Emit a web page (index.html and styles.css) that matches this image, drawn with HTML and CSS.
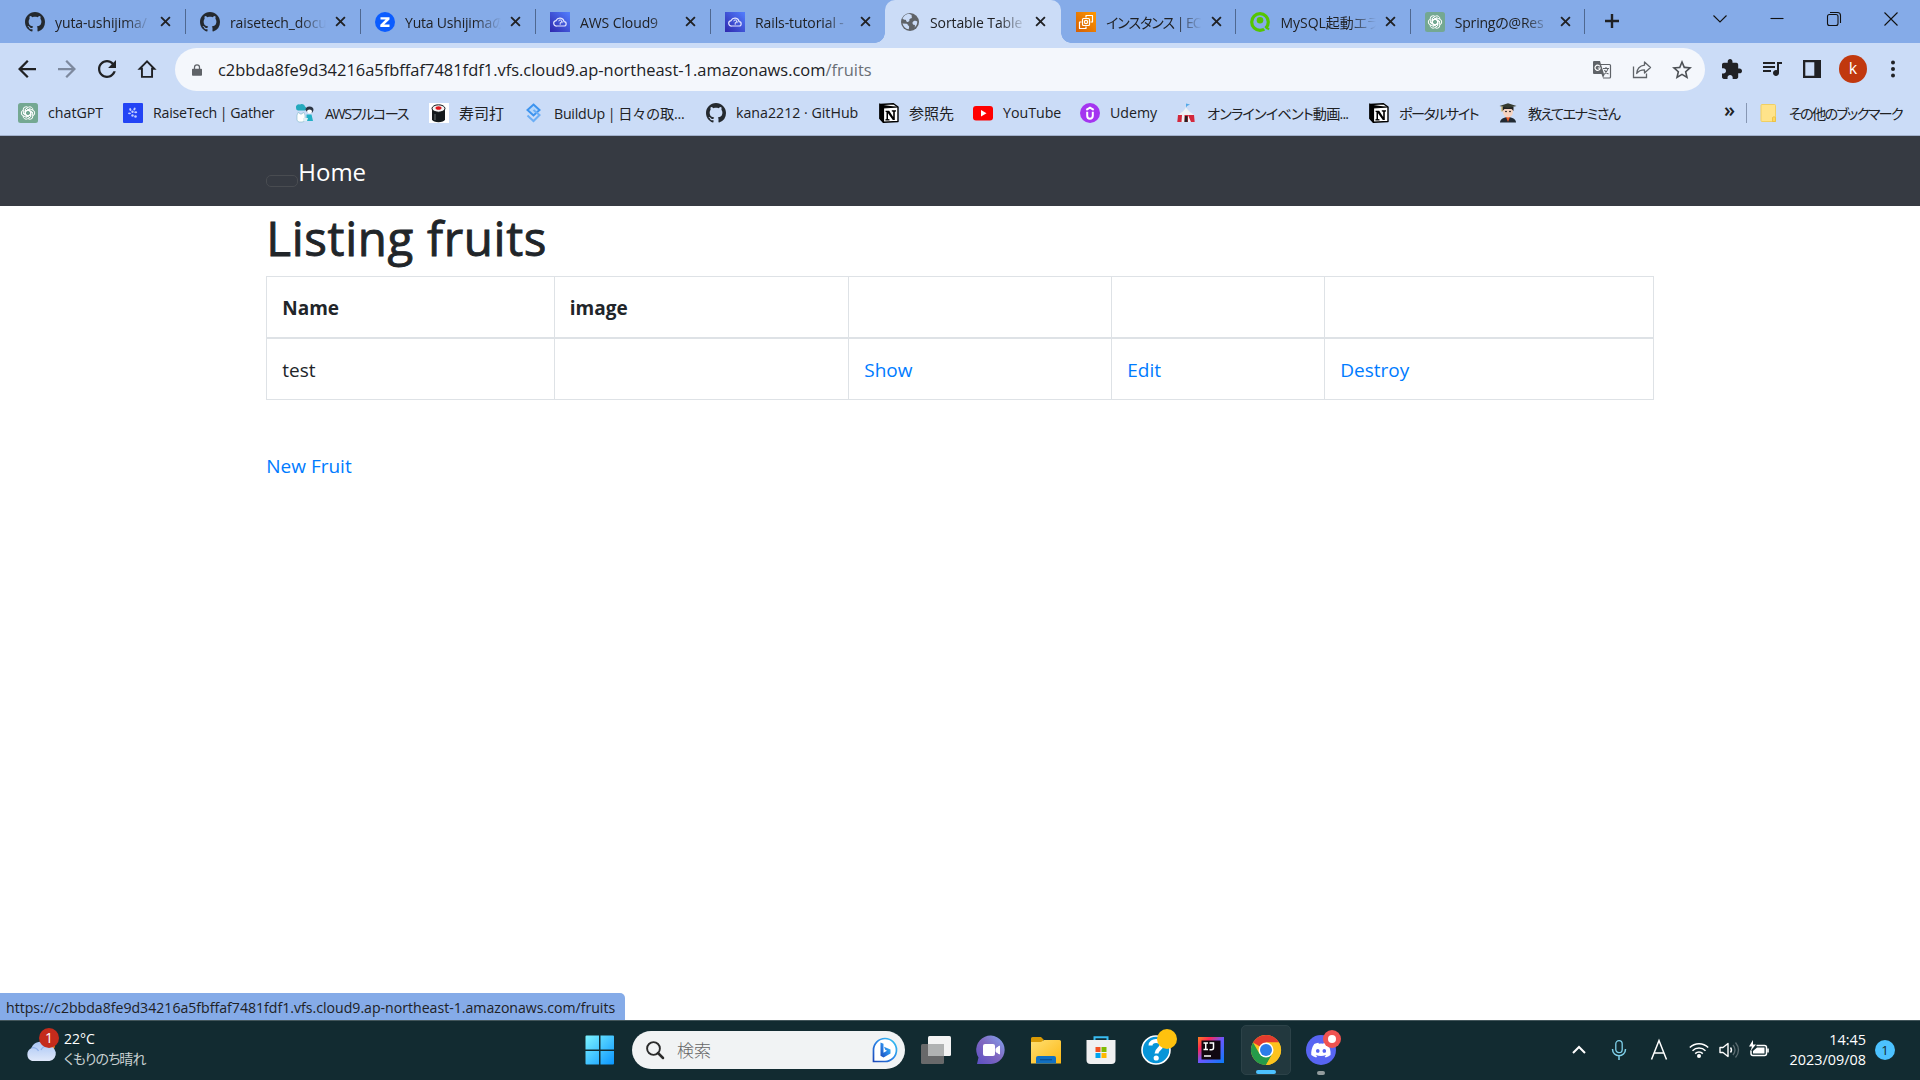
FILE: index.html
```html
<!DOCTYPE html>
<html lang="ja">
<head>
<meta charset="utf-8">
<title>Sortable Table</title>
<link rel="stylesheet" href="styles.css">
</head>
<body>
<svg class="defs" width="0" height="0">
  <defs>
    <linearGradient id="gAws" x1="0" y1="1" x2="1" y2="0"><stop offset="0" stop-color="#2e27ad"/><stop offset="1" stop-color="#527fff"/></linearGradient>
    <linearGradient id="gOrange" x1="0" y1="1" x2="1" y2="0"><stop offset="0" stop-color="#d45f07"/><stop offset="1" stop-color="#ff9900"/></linearGradient>
    <linearGradient id="gWin" x1="0" y1="0" x2="1" y2="1"><stop offset="0" stop-color="#7df3ff"/><stop offset="1" stop-color="#0a96ff"/></linearGradient>
    <linearGradient id="gCloud" x1="0" y1="0" x2="0" y2="1"><stop offset="0" stop-color="#a9c6f5"/><stop offset="1" stop-color="#dfe8fa"/></linearGradient>
    <linearGradient id="gBing" x1="0" y1="1" x2="1" y2="0"><stop offset="0" stop-color="#1b48b8"/><stop offset=".5" stop-color="#2a85e8"/><stop offset="1" stop-color="#35c8f2"/></linearGradient>
    <linearGradient id="gChat" x1="0" y1="1" x2="1" y2="0"><stop offset="0" stop-color="#5a4fc4"/><stop offset=".5" stop-color="#8067c0"/><stop offset="1" stop-color="#82a5f0"/></linearGradient>
    <linearGradient id="gFolder" x1="0" y1="0" x2="1" y2="1"><stop offset="0" stop-color="#ffdf72"/><stop offset="1" stop-color="#fdb813"/></linearGradient>
    <linearGradient id="gIj" x1="0" y1="0" x2="1" y2="1"><stop offset="0" stop-color="#fc801d"/><stop offset=".25" stop-color="#fe2857"/><stop offset=".5" stop-color="#6b57ff"/><stop offset="1" stop-color="#087cfa"/></linearGradient>
    <symbol id="github" viewBox="0 0 16 16"><path fill="#24292f" d="M8 0C3.58 0 0 3.58 0 8c0 3.54 2.29 6.53 5.47 7.59.4.07.55-.17.55-.38 0-.19-.01-.82-.01-1.49-2.01.37-2.53-.49-2.69-.94-.09-.23-.48-.94-.82-1.13-.28-.15-.68-.52-.01-.53.63-.01 1.08.58 1.23.82.72 1.21 1.87.87 2.33.66.07-.52.28-.87.51-1.07-1.78-.2-3.64-.89-3.64-3.95 0-.87.31-1.59.82-2.15-.08-.2-.36-1.02.08-2.12 0 0 .67-.21 2.2.82.64-.18 1.32-.27 2-.27s1.36.09 2 .27c1.53-1.04 2.2-.82 2.2-.82.44 1.1.16 1.92.08 2.12.51.56.82 1.27.82 2.15 0 3.07-1.87 3.75-3.65 3.95.29.25.54.73.54 1.48 0 1.07-.01 1.93-.01 2.2 0 .21.15.46.55.38A8.01 8.01 0 0 0 16 8c0-4.42-3.58-8-8-8z"/></symbol>
    <symbol id="close" viewBox="0 0 12 12"><path d="M1.2 1.2l9.6 9.6M10.8 1.2l-9.6 9.6" stroke="#202124" stroke-width="2" fill="none"/></symbol>
    <symbol id="cloud9" viewBox="0 0 20 20"><path fill="url(#gAws)" d="M0 0h20v20H0z"/><path d="M6.8 14h7a2.200 2.200 0 0 0 .3-4.400 4.200 4.200 0 0 0-8-1A2.700 2.700 0 0 0 6.800 14z" fill="none" stroke="#e4e6ff" stroke-width="1.200"/><path d="M8.800 9.300a1.400 1.400 0 1 1 1.400 1.400v2M12 9v2.200" fill="none" stroke="#e4e6ff" stroke-width="1"/></symbol>
    <symbol id="gpt" viewBox="0 0 20 20"><rect width="20" height="20" rx="2.500" fill="#74a892"/><g fill="none" stroke="#fff" stroke-width="1"><path id="petal" d="M7.300 12.300V6.300L10.300 4.300a2.900 2.900 0 0 1 4.500 2.700M7.300 8.400L10 6.900l4.600 2.700"/><use href="#petal" transform="rotate(60 10 10)"/><use href="#petal" transform="rotate(120 10 10)"/><use href="#petal" transform="rotate(180 10 10)"/><use href="#petal" transform="rotate(240 10 10)"/><use href="#petal" transform="rotate(300 10 10)"/></g></symbol>
    <symbol id="notion" viewBox="0 0 20 20"><path d="M1 1.500L14.500.7 19 4v14.500L4.500 19.300 1 15.500z" fill="#fff" stroke="#000" stroke-width="1.400" stroke-linejoin="round"/><path d="M1 1.500L4.500 5v14.500L1 15.500zM1 1.500L4.500 5 19 4" fill="#000" stroke="#000" stroke-width="1.200"/><path d="M6.500 7.800h3.700l4 6.200V8.800l-1.400-.3V7.300h4.200v1.200l-1.200.3V17h-2L9 10.300v5.600l1.500.4v1.100H6.400v-1.100l1.100-.4V9l-1-.2z" fill="#000"/></symbol>
  </defs>
</svg>

<header class="tabstrip">
  <div class="tab"><svg class="fav"><use href="#github"/></svg><span class="title">yuta-ushijima/</span><svg class="x"><use href="#close"/></svg></div>
  <div class="tab"><svg class="fav"><use href="#github"/></svg><span class="title">raisetech_docu</span><svg class="x"><use href="#close"/></svg></div>
  <div class="tab"><svg class="fav" viewBox="0 0 20 20"><circle cx="10" cy="10" r="10" fill="#0b5cff"/><path d="M5.500 5.200h9v2.200l-5.300 5.200h5.300v2.300H5.300v-2.200l5.400-5.200H5.500z" fill="#fff"/></svg><span class="title kana-tail">Yuta Ushijimaの</span><svg class="x"><use href="#close"/></svg></div>
  <div class="tab"><svg class="fav"><use href="#cloud9"/></svg><span class="title">AWS Cloud9</span><svg class="x"><use href="#close"/></svg></div>
  <div class="tab no-line"><svg class="fav"><use href="#cloud9"/></svg><span class="title">Rails-tutorial -</span><svg class="x"><use href="#close"/></svg></div>
  <div class="tab active"><svg class="fav" viewBox="0 0 20 20"><circle cx="10" cy="10" r="9" fill="#5f6368"/><path d="M9 1.800c-3 .3-5.500 2.200-6.500 5 .8 1.200 2 .7 3 .9.800.3.5 1.500 1.300 2 1 .5 2.200.1 2.600-.9.300-.9-.5-1.300.3-1.900.8-.5 2-.2 2.200-1.300.2-1-.6-1.500-.2-2.700zM2.500 11.500l4.300.2c1.200.4.8 1.500 1.700 2 1 .3.700 1.800.2 3.600-3-.4-5.300-2.700-6.200-5.800zM17.300 9.500c-1.300-.8-2.500-.8-3.800-.2-1.200.8-1.400 2.200-.4 3.100.7.600 1.700.2 1.900 1 .1.900-.4 1.500-.5 2 1.800-1.300 2.900-3.300 2.800-5.900z" fill="#cbdcf7"/></svg><span class="title">Sortable Table</span><svg class="x"><use href="#close"/></svg></div>
  <div class="tab late"><svg class="fav" viewBox="0 0 20 20"><path fill="url(#gOrange)" d="M0 0h20v20H0z"/><g fill="none" stroke="#fff" stroke-width="1.200" stroke-linejoin="round"><path d="M10 5.500V3.500h6.500V10h-2M5.500 10h-2v6.500H10v-2"/><rect x="6.500" y="6.500" width="7" height="7" rx="1"/><circle cx="10" cy="10" r="1.600"/></g></svg><span class="title kana">インスタンス | EC</span><svg class="x"><use href="#close"/></svg></div>
  <div class="tab late"><svg class="fav" viewBox="0 0 20 20"><circle cx="10" cy="10" r="8.300" fill="none" stroke="#55c500" stroke-width="3.200"/><circle cx="10" cy="8.300" r="3.300" fill="#55c500"/><path d="M13.500 15l4 5" stroke="#86ace8" stroke-width="1.500"/><path d="M15.500 14.500l3.500 3" stroke="#55c500" stroke-width="2.200"/></svg><span class="title kanji-tab">MySQL起動エラ</span><svg class="x"><use href="#close"/></svg></div>
  <div class="tab late"><svg class="fav"><use href="#gpt"/></svg><span class="title kana-tail">Springの@Res</span><svg class="x"><use href="#close"/></svg></div>
  <svg class="plus" viewBox="0 0 16 16"><path d="M8 1v14M1 8h14" stroke="#202124" stroke-width="2.400"/></svg>
  <div class="window-buttons">
    <svg viewBox="0 0 16 16"><path d="M1.500 4.500L8 11l6.500-6.500"/></svg>
    <svg viewBox="0 0 16 16"><path d="M1.500 7.500h13"/></svg>
    <svg viewBox="0 0 16 16"><rect x="1.500" y="3.500" width="10.500" height="11" rx="2"/><path d="M4 1.500h7.500a3 3 0 0 1 3 3V12"/></svg>
    <svg viewBox="0 0 16 16"><path d="M1.500 1.500l13 13M14.500 1.500l-13 13"/></svg>
  </div>
</header>

<section class="toolbar">
  <div class="nav-buttons">
    <svg viewBox="4 4 16 16"><path fill="#202124" d="M20 11H7.830l5.590-5.590L12 4l-8 8 8 8 1.410-1.410L7.830 13H20v-2z"/></svg>
    <svg viewBox="4 4 16 16"><path fill="#7d899e" d="M12 4l-1.410 1.410L16.170 11H4v2h12.170l-5.580 5.590L12 20l8-8z"/></svg>
    <svg viewBox="4 4 16 16"><path fill="#202124" d="M17.650 6.350C16.200 4.900 14.210 4 12 4c-4.420 0-7.990 3.580-7.990 8s3.570 8 7.990 8c3.730 0 6.840-2.550 7.730-6h-2.080c-.82 2.330-3.040 4-5.650 4-3.310 0-6-2.690-6-6s2.690-6 6-6c1.660 0 3.140.69 4.220 1.780L13 11h7V4l-2.350 2.350z"/></svg>
    <svg viewBox="0 0 16 16"><path d="M8 1.200L1.500 7.800h2V15h9V7.800h2z" fill="none" stroke="#202124" stroke-width="1.700"/></svg>
  </div>
  <div class="omnibox">
    <svg class="lock" viewBox="0 0 12 14"><path d="M1 5.500h10a1 1 0 0 1 1 1V13a1 1 0 0 1-1 1H1a1 1 0 0 1-1-1V6.500a1 1 0 0 1 1-1z" fill="#5f6368"/><path d="M3 6V3.700a3 3 0 0 1 6 0V6" fill="none" stroke="#5f6368" stroke-width="1.500"/></svg>
    <span class="url">c2bbda8fe9d34216a5fbffaf7481fdf1.vfs.cloud9.ap-northeast-1.amazonaws.com<span class="path">/fruits</span></span>
    <div class="page-actions">
      <svg viewBox="0 0 20 20"><path d="M8 4.500h9.500a1 1 0 0 1 1 1V17a1 1 0 0 1-1 1H11" fill="none" stroke="#5f6368" stroke-width="1.200"/><path d="M2 1h6l1 3.500 3 9.500H2a1 1 0 0 1-1-1V2a1 1 0 0 1 1-1zM9.500 14l1.500 4 1.800-4z" fill="#5f6368"/><path d="M7.800 6.300A2.600 2.600 0 1 0 8.200 8H5.800" fill="none" stroke="#fff" stroke-width="1.200"/><path d="M11 8.500h6M14 7v1.500M16 8.500c-.5 2.500-2.500 4.500-3.500 5.500M12.500 10c.7 1.800 2.500 3.300 4 4" fill="none" stroke="#5f6368" stroke-width="1.100"/></svg>
      <svg viewBox="0 0 20 20"><path d="M1.500 6.500v11h13v-4" fill="none" stroke="#5f6368" stroke-width="1.300"/><path d="M12.500 2l6 5.500-6 5.500V9.800c-3.500 0-6 1-7.800 3.700.3-4 2.800-7.600 7.800-8.300z" fill="none" stroke="#5f6368" stroke-width="1.300" stroke-linejoin="round"/></svg>
      <svg viewBox="2 2 20 20"><path fill="#4d5156" d="M22 9.240l-7.190-.62L12 2 9.190 8.630 2 9.240l5.460 4.730L5.820 21 12 17.270 18.180 21l-1.630-7.030L22 9.240zM12 15.400l-3.760 2.270 1-4.280-3.320-2.880 4.380-.38L12 6.100l1.710 4.040 4.380.38-3.320 2.880 1 4.280L12 15.400z"/></svg>
    </div>
  </div>
  <div class="extensions">
    <svg viewBox="2 1 21 21"><path fill="#202124" d="M20.500 11H19V7c0-1.100-.9-2-2-2h-4V3.500C13 2.120 11.880 1 10.500 1S8 2.120 8 3.500V5H4c-1.100 0-1.990.9-1.990 2v3.800H3.500c1.490 0 2.700 1.210 2.700 2.700s-1.210 2.700-2.700 2.700H2V20c0 1.100.9 2 2 2h3.800v-1.500c0-1.490 1.210-2.700 2.700-2.700 1.490 0 2.700 1.210 2.700 2.700V22H17c1.100 0 2-.9 2-2v-4h1.500c1.380 0 2.500-1.120 2.500-2.500S21.880 11 20.500 11z"/></svg>
    <svg viewBox="2 3 20 20"><path fill="#202124" d="M15 6H3v2h12V6zm0 4H3v2h12v-2zM3 16h8v-2H3v2zM17 6v8.180c-.31-.11-.65-.18-1-.18-1.660 0-3 1.340-3 3s1.340 3 3 3 3-1.340 3-3V8h3V6h-5z"/></svg>
    <svg viewBox="0 0 20 20"><path fill="#202124" fill-rule="evenodd" d="M1 1h18v18H1zM3.300 3.300v13.400h9V3.300z"/></svg>
    <span class="avatar">k</span>
    <svg viewBox="0 0 20 20"><circle cx="10" cy="3.500" r="2" fill="#202124"/><circle cx="10" cy="10" r="2" fill="#202124"/><circle cx="10" cy="16.500" r="2" fill="#202124"/></svg>
  </div>
</section>

<nav class="bookmarks">
  <div class="marks">
    <a><svg><use href="#gpt"/></svg><span>chatGPT</span></a>
    <a><svg viewBox="0 0 20 20"><rect width="20" height="20" rx="1" fill="#2344f5"/><g fill="#c3ceff"><ellipse cx="7.300" cy="6.500" rx="1" ry="1.500" transform="rotate(-25 7.300 6.500)"/><ellipse cx="11.500" cy="6" rx="1" ry="1.500" transform="rotate(30 11.500 6)"/><circle cx="9.500" cy="8.800" r="1.200"/><ellipse cx="6.500" cy="10.300" rx="1.500" ry=".9"/><ellipse cx="12.700" cy="9.300" rx="1.500" ry="1"/><circle cx="9.500" cy="12.500" r="1.200"/><circle cx="12.500" cy="13.500" r="1.300"/></g></svg><span class="wide">RaiseTech | Gather</span></a>
    <a><svg viewBox="0 0 20 20"><path d="M1 5a3 3 0 0 1 4-3.500 3.500 3.500 0 0 1 5 2 2.200 2.200 0 0 1 0 4H3A2.500 2.500 0 0 1 1 5z" fill="#25a9bd"/><path d="M10.500 7a4 3.600 0 0 1 8 0l-1 2.500h-5z" fill="#2c3544"/><ellipse cx="14.500" cy="8.500" rx="2.500" ry="2" fill="#fff"/><path d="M2 12l1.500-3 1.500 2h2l1.500-2L10 12v5a3 3 0 0 1-3 2H4a3 3 0 0 1-2-2z" fill="#fff" stroke="#7fb9c8" stroke-width=".6"/><path d="M11.500 11.500h5L18 18h-6.500z" fill="#22b0c5"/><path d="M8 15h5l-1 3H8z" fill="#dff1f5"/></svg><span class="kana aws">AWSフルコース</span></a>
    <a><svg viewBox="0 0 20 20"><path fill="#fff" d="M0 0h20v20H0z"/><path d="M3 5v11.500c1 3.500 12 3.500 13 0V5z" fill="#14191b"/><ellipse cx="9.500" cy="5.500" rx="6.500" ry="3.700" fill="#f4f4f4" stroke="#14191b"/><ellipse cx="9.500" cy="5" rx="3" ry="1.800" fill="#e0171c"/><path d="M6 11v6" stroke="#687072"/></svg><span class="kanji">寿司打</span></a>
    <a><svg viewBox="-1.500 0 20 20"><path d="M8 1.500l6 5.500-6 5.500L2 7z" fill="#b5d6fb" stroke="#3d94ef" stroke-width="2"/><path d="M8 7l6 5-6 6-6-5.500" fill="none" stroke="#6baef5" stroke-width="2"/></svg><span class="wide">BuildUp | 日々の取...</span></a>
    <a><svg><use href="#github"/></svg><span>kana2212 · GitHub</span></a>
    <a><svg><use href="#notion"/></svg><span class="kanji">参照先</span></a>
    <a><svg viewBox="0 0 20 20"><rect y="3" width="20" height="14.500" rx="3" fill="#f00"/><path d="M8 7l5.500 3.200L8 13.500z" fill="#fff"/></svg><span>YouTube</span></a>
    <a><svg viewBox="0 0 20 20"><circle cx="10" cy="10" r="10" fill="#a435f0"/><path d="M6.300 6.800L10 4.600l3.700 2.200M7.200 8.800v4c0 4 5.600 4 5.600 0v-4" fill="none" stroke="#fff" stroke-width="2"/></svg><span>Udemy</span></a>
    <a><svg viewBox="1 0 20 20"><path d="M10 5v-4.500l4 1-3 1.500" fill="#54a9e8"/><path d="M10 4C8.500 8.500 4 10 2 12h16c-2-2-6-3.500-8-8z" fill="#eef1f5"/><path d="M2 12h16l.7 7H1.300z" fill="#d3283d"/><path d="M6 12l-.5 7h3V12M12 12v7h3" fill="#eef1f5"/><path d="M9 13h2.500v6H8.500z" fill="#222"/></svg><span class="kana event">オンラインイベント動画...</span></a>
    <a><svg><use href="#notion"/></svg><span class="kana portal">ポータルサイト</span></a>
    <a><svg viewBox="0 0 20 20"><path d="M2 19.500c0-7 16-7 16 0z" fill="#222a33"/><path d="M8 14h4l-2 5z" fill="#e85a28"/><ellipse cx="10" cy="8.500" rx="5" ry="6" fill="#f6d3c0"/><path d="M4.500 8V4h11v4l-2-2h-7z" fill="#222"/><path d="M1.500 3L10 .3 18.500 3 10 5z" fill="#353a2e"/><path d="M4 3.500v5" stroke="#cda630"/><circle cx="8" cy="8.500" r=".8"/><circle cx="12" cy="8.500" r=".8"/></svg><span class="kana teach">教えてエナミさん</span></a>
  </div>
  <span class="more">»</span>
  <a class="others"><svg viewBox="0 0 20 20"><path d="M3 1.500h12.500a1 1 0 0 1 1 1V18.500H3a1 1 0 0 1-1-1v-15a1 1 0 0 1 1-1z" fill="#ffe38a" stroke="#f0cf63"/><path d="M13.500 18.500v-4a2 2 0 0 1 3 0v4z" fill="#ffd75a" stroke="#e5b93d" stroke-width=".7"/></svg><span class="kana">その他のブックマーク</span></a>
</nav>

<div class="page">
  <nav class="navbar"><div class="container"><button class="toggler"></button><a class="brand">Home</a></div></nav>
  <main class="container">
    <h1>Listing fruits</h1>
    <table class="table">
      <colgroup><col class="c1"><col class="c2"><col class="c3"><col class="c4"><col></colgroup>
      <thead><tr><th>Name</th><th>image</th><th></th><th></th><th></th></tr></thead>
      <tbody><tr><td>test</td><td></td><td><a>Show</a></td><td><a>Edit</a></td><td><a>Destroy</a></td></tr></tbody>
    </table>
    <br>
    <a>New Fruit</a>
  </main>
  <div class="status">https://c2bbda8fe9d34216a5fbffaf7481fdf1.vfs.cloud9.ap-northeast-1.amazonaws.com/fruits</div>
</div>

<footer class="taskbar">
  <div class="weather">
    <svg viewBox="0 0 36 36"><circle cx="23" cy="17" r="7" fill="#f78b1e"/><path d="M7 33a7 7 0 0 1-.5-13 8.500 8.500 0 0 1 15.500-2 7.500 7.500 0 0 1 2.500 15z" fill="url(#gCloud)"/><path d="M6.500 20c3-1 6 .5 7 3M22 18c-3 0-5 2-6 4" fill="none" stroke="#8eb0ea" stroke-width="1.200"/><circle cx="24" cy="10" r="10" fill="#c42b1c"/></svg>
    <span class="badge">1</span>
    <div class="forecast"><span>22°C</span><span class="kana">くもりのち晴れ</span></div>
  </div>
  <div class="apps">
    <svg class="start" viewBox="0 0 30 30"><path d="M.500 1.500q0-1 1-1H14v14H.500zM15.500.500H28q1 0 1 1v13H15.500zM.500 16H14v13.500H1.500q-1 0-1-1zM15.500 16H29v12.500q0 1-1 1H15.500z" fill="url(#gWin)"/></svg>
    <div class="search">
      <svg class="glass" viewBox="0 0 18 18"><circle cx="7.500" cy="7.500" r="6.400" fill="none" stroke="#2b2b2b" stroke-width="1.900"/><path d="M12 12l5 5" stroke="#2b2b2b" stroke-width="2.500" stroke-linecap="round"/></svg>
      <span>検索</span>
      <svg class="bing" viewBox="0 0 26 26"><path d="M1.500 24.500V13a11.500 11.500 0 1 1 11.500 11.500z" fill="#fff" stroke="url(#gBing)" stroke-width="1.700"/><path d="M8.500 5.500l3 1.200v9l3.500-2-1.800-1-1.200-3 6.500 2.900v3.800l-7 4.100-3-1.700z" fill="url(#gBing)"/></svg>
    </div>
    <div class="app"><svg viewBox="0 0 30 30"><rect y="9" width="23" height="20" rx="1.500" fill="#68696a"/><rect x="7" y="1" width="23" height="20" rx="1.500" fill="#f3f3f3"/><path d="M7 9h16v12H8.500Q7 21 7 19.500z" fill="#b0b2b2"/></svg></div>
    <div class="app"><svg viewBox="0 0 30 30"><path d="M1 29l1.500-6.500A14.200 14.200 0 1 1 15 29z" fill="url(#gChat)"/><rect x="7" y="9" width="12" height="12" rx="2" fill="#fff"/><path d="M20 13.500l3.500-2.500v8L20 16.800z" fill="#fff" stroke="#fff"/></svg></div>
    <div class="app"><svg viewBox="0 0 30 30"><path d="M0 3.500Q0 2 1.500 2H10l3 3h-1v4H0z" fill="#d99a05"/><path d="M0 7h10l3-2h15.500Q30 5 30 6.500V28.500H0z" fill="url(#gFolder)"/><path d="M5 28.500V23q0-2 2-2h16q2 0 2 2v5.500z" fill="#1170c2"/><path d="M9 24.700h12" stroke="#0b4f92" stroke-width="1.200"/></svg></div>
    <div class="app"><svg viewBox="0 0 30 30"><path d="M8.500 8V2.200h13V8" fill="none" stroke="#38bdf2" stroke-width="2"/><path d="M.5 5h29v20q0 4-4 4h-21q-4 0-4-4z" fill="#f0f0f1"/><path d="M9.500 12h5v5h-5z" fill="#f25022"/><path d="M15.500 12h5v5h-5z" fill="#7fba00"/><path d="M9.500 18h5v5h-5z" fill="#00a4ef"/><path d="M15.500 18h5v5h-5z" fill="#ffb900"/></svg></div>
    <div class="app"><svg class="help" viewBox="0 0 36 36"><circle cx="15" cy="21" r="14" fill="#0795d8" stroke="#fff" stroke-width="1.600"/><path d="M9.500 16.500c0-6 11-6 11-.5 0 4-5 4-5 8.500" fill="none" stroke="#fff" stroke-width="4"/><circle cx="15.200" cy="29" r="2.600" fill="#fff"/><circle cx="26" cy="10" r="10" fill="#ffc20e"/></svg></div>
    <div class="app"><svg viewBox="0 0 30 30"><path d="M2 2h26v26H2z" fill="url(#gIj)"/><path d="M5.500 5.500h19v19h-19z" fill="#100810"/><path d="M7.500 8h4.500M7.500 14.500h4.500M9.750 8v6.500M13.500 8h4v4.700q0 2-2 2h-2M8 21h7" fill="none" stroke="#fff" stroke-width="1.500"/></svg></div>
    <div class="app current"><svg viewBox="0 0 30 30"><circle cx="15" cy="15" r="15" fill="#fcc31e"/><path d="M15 15L2 7.500A15 15 0 0 1 28 7.500H15z" fill="#e33b2e"/><path d="M2 7.500A15 15 0 0 0 15 30l6.500-11.200L15 15 8.500 18.800z" fill="#259b4a"/><path d="M15 7.500h13a15 15 0 0 1-13 22.500l6.500-11.300z" fill="#fcc31e"/><circle cx="15" cy="15" r="7.500" fill="#fff"/><circle cx="15" cy="15" r="6" fill="#2b7de9"/></svg><i></i></div>
    <div class="app idle"><svg class="help" viewBox="0 0 36 36"><circle cx="15" cy="21" r="15" fill="#5865f2"/><path transform="translate(5.200 11.300) scale(.82)" fill="#fff" d="M20.317 4.370a19.791 19.791 0 0 0-4.885-1.515c-.21.375-.444.864-.608 1.250a18.270 18.270 0 0 0-5.487 0 12.640 12.640 0 0 0-.617-1.250A19.736 19.736 0 0 0 3.677 4.370C.533 9.046-.32 13.580.099 18.058a19.900 19.900 0 0 0 5.993 3.030c.462-.63.874-1.295 1.226-1.994a13.100 13.100 0 0 1-1.872-.892l.372-.292c3.928 1.793 8.180 1.793 12.062 0l.373.292a12.300 12.300 0 0 1-1.873.892c.36.698.772 1.362 1.225 1.993a19.840 19.840 0 0 0 6.002-3.030c.5-5.177-.838-9.674-3.549-13.660zM8.020 15.330c-1.183 0-2.157-1.085-2.157-2.419s.955-2.419 2.157-2.419c1.210 0 2.176 1.096 2.157 2.420 0 1.333-.956 2.418-2.157 2.418zm7.975 0c-1.183 0-2.157-1.085-2.157-2.419s.955-2.419 2.157-2.419c1.210 0 2.176 1.096 2.157 2.420 0 1.333-.946 2.418-2.157 2.418z"/><circle cx="26" cy="10" r="9" fill="#ef5350"/><circle cx="26" cy="10" r="4" fill="#fff"/></svg><i></i></div>
  </div>
  <div class="tray">
    <svg viewBox="0 0 20 20"><path d="M4 13l6-6 6 6" fill="none" stroke="#fff" stroke-width="2"/></svg>
    <svg viewBox="0 0 20 20"><rect x="6.800" y=".7" width="6.400" height="12" rx="3.200" fill="none" stroke="#7fd0ea" stroke-width="1.300"/><path d="M3.500 9c0 9 13 9 13 0M10 15.800V20" fill="none" stroke="#7fd0ea" stroke-width="1.500"/></svg>
    <svg viewBox="0 0 20 20"><path d="M2.500 19.500L10 .5l7.500 19M5 13h10" fill="none" stroke="#fff" stroke-width="1.500"/></svg>
    <svg viewBox="0 0 20 20"><g fill="none" stroke="#fff" stroke-width="1.500"><path d="M.8 7.500a13 13 0 0 1 18.400 0M3.500 10.700a9.200 9.200 0 0 1 13 0M6.200 13.600a5.400 5.400 0 0 1 7.600 0"/></g><circle cx="10" cy="16" r="2" fill="#fff"/></svg>
    <svg viewBox="0 0 20 20"><path d="M1 7.500h3L9 3.500v13l-5-4H1z" fill="none" stroke="#fff" stroke-width="1.400" stroke-linejoin="round"/><path d="M11.500 7.500q2 2.500 0 5" fill="none" stroke="#fff" stroke-width="1.400"/><path d="M14 5q4 5 0 10M16.500 2.500q6 7.500 0 15" fill="none" stroke="#5b6b70" stroke-width="1.300"/></svg>
    <svg viewBox="0 0 20 20"><path d="M7.500 5.500h8q2 0 2 2v6q0 2-2 2H4q-2 0-2-2v-3" fill="none" stroke="#fff" stroke-width="1.500"/><path d="M8 7.500h7.500v6H4V11z" fill="#fff"/><path d="M18.200 8.500h1.600v4h-1.600zM4 0L0 6.500h3L1.500 11 7 4.500H4z" fill="#fff"/></svg>
    <div class="clock"><span>14:45</span><span>2023/09/08</span></div>
    <span class="count">1</span>
  </div>
</footer>
</body>
</html>
```

FILE: styles.css
```css
* { box-sizing: border-box; }
body {
  margin: 0;
  width: 1920px;
  height: 1080px;
  overflow: hidden;
  display: flex;
  flex-direction: column;
  background: #fff;
  color: #202124;
  font-family: "Open Sans", "Noto Sans CJK JP", sans-serif;
}
svg { display: block; flex: none; overflow: visible; }
.defs { height: 0; }

/* tab strip */
.tabstrip {
  display: flex;
  height: 43px;
  padding-left: 10px;
  background: #85abe8;
}
.tab {
  position: relative;
  display: flex;
  align-items: center;
  width: 175px;
  height: 43px;
  padding-left: 15px;
  flex: none;
}
.tab.late { width: 174.4px; }
.tab::after {
  content: "";
  position: absolute;
  right: -1px;
  top: 9px;
  width: 1px;
  height: 25px;
  background: #4f6890;
}
.tab.no-line::after, .tab.active::after { display: none; }
.tab.active {
  width: 176px;
  background: #cbdcf7;
  border-radius: 10px 10px 0 0;
}
.tab.active::before {
  content: "";
  position: absolute;
  left: -10px;
  right: -10px;
  bottom: 0;
  height: 10px;
  background:
    radial-gradient(circle at 0 0, transparent 9.500px, #cbdcf7 10px) left / 10px 10px no-repeat,
    radial-gradient(circle at 100% 0, transparent 9.500px, #cbdcf7 10px) right / 10px 10px no-repeat;
}
.fav { width: 20px; height: 20px; }
.title {
  flex: none;
  width: 96px;
  margin: 3px 10px 0;
  font-size: 14px;
  line-height: 20px;
  letter-spacing: -.1px;
  white-space: nowrap;
  -webkit-mask-image: linear-gradient(90deg, #000 72%, transparent);
  mask-image: linear-gradient(90deg, #000 72%, transparent);
}
.kana-tail { font-feature-settings: "palt"; letter-spacing: -.2px; }
.kanji-tab { font-feature-settings: "palt"; letter-spacing: 0; }
.x { width: 11px; height: 11px; margin-left: -1px; }
.plus { width: 16px; height: 16px; margin: 13px 0 0 20px; }
.window-buttons {
  display: flex;
  gap: 41px;
  margin: 11px 21px 0 auto;
}
.window-buttons svg { width: 16px; height: 16px; fill: none; stroke: #111; stroke-width: 1.1; }

/* toolbar */
.toolbar {
  display: flex;
  align-items: center;
  height: 53px;
  padding-left: 18px;
  background: #cbdcf7;
}
.nav-buttons { display: flex; flex: none; gap: 22px; width: 157px; margin-top: -2px; }
.nav-buttons svg { width: 18px; height: 18px; }
.omnibox {
  display: flex;
  flex: none;
  align-items: center;
  width: 1530px;
  height: 43px;
  padding: 0 13px 0 17px;
  border-radius: 22px;
  background: #f4f7fc;
}
.lock { width: 10px; height: 14px; }
.url { margin-left: 16px; font-size: 16.45px; white-space: nowrap; }
.path { color: #6a6f76; }
.page-actions { display: flex; gap: 20px; margin-left: auto; }
.page-actions svg { width: 20px; height: 20px; }
.extensions { display: flex; align-items: center; gap: 20px; margin: -2px 0 0 17px; }
.extensions svg { width: 20px; height: 20px; }
.extensions svg:last-child { margin-left: -4px; }
.avatar {
  width: 28px;
  height: 28px;
  margin-left: -3px;
  border-radius: 50%;
  background: #c1380e;
  color: #fff;
  font-size: 16px;
  line-height: 27px;
  text-align: center;
}

/* bookmarks */
.bookmarks {
  display: flex;
  align-items: center;
  height: 40px;
  padding: 0 18px 6px;
  border-bottom: 1px solid #a2b1cc;
  background: #cbdcf7;
  font-size: 14.2px;
  white-space: nowrap;
}
.marks {
  display: grid;
  grid-template-columns: 105px 172px 134px 95px 182px 173px 94px 107px 97px 192px 129px 140px;
}
.bookmarks a { display: flex; align-items: center; gap: 10px; }
.bookmarks svg { width: 20px; height: 20px; }
.wide { letter-spacing: -.25px; word-spacing: -.6px; }
.kana { font-feature-settings: "palt"; letter-spacing: -1px; }
.bookmarks .aws { letter-spacing: -1.400px; }
.bookmarks .event { letter-spacing: -.85px; }
.bookmarks .portal { letter-spacing: -1.600px; }
.bookmarks .teach { letter-spacing: -1.600px; }
.bookmarks .others .kana { letter-spacing: -1.700px; }
.kanji { font-size: 15px; }
.more { margin-left: 86px; font-size: 20px; font-weight: 600; line-height: 20px; margin-top: -5px; }
.others { margin-left: auto; padding-left: 12px; border-left: 1px solid #8797b3; }

/* page */
.page {
  position: relative;
  flex: 1;
  color: #212529;
  font-size: 19px;
  line-height: 30px;
}
.container { width: 1387.5px; margin: 0 auto; }
.navbar { height: 70px; background: #363a42; }
.navbar .container { display: flex; }
.toggler {
  width: 32px;
  height: 12px;
  margin-top: 39px;
  padding: 0;
  border: 1px solid #494c51;
  border-radius: 5px;
  background: transparent;
}
.brand { color: #fff; font-size: 24px; line-height: 38px; margin-top: 17px; }
h1 {
  margin: 0;
  padding-top: 2px;
  height: 70px;
  font-size: 47.5px;
  font-weight: 500;
  line-height: 60px;
  letter-spacing: .65px;
  -webkit-text-stroke: .9px #212529;
}
.table {
  width: 100%;
  margin-bottom: 21px;
  border-collapse: collapse;
  table-layout: fixed;
}
.table th, .table td {
  height: 61px;
  padding: 16px 15px 14px;
  border: 1px solid #dee2e6;
  text-align: left;
  vertical-align: top;
}
.table th { border-bottom-width: 2px; font-weight: 700; }
.c1 { width: 287.500px; }
.c2 { width: 294.500px; }
.c3 { width: 263px; }
.c4 { width: 213px; }
main a { color: #007bff; }
.status {
  position: absolute;
  left: 0;
  bottom: 0;
  width: 625px;
  height: 27px;
  padding-left: 6px;
  border-radius: 0 5px 0 0;
  background: #85abe8;
  color: #202124;
  font-size: 14.12px;
  line-height: 29px;
  white-space: nowrap;
}

/* taskbar */
.taskbar {
  display: flex;
  height: 60px;
  padding-bottom: 2px;
  border-top: 1px solid #43565b;
  background: #122b31;
  color: #fff;
}
.weather { position: relative; display: flex; width: 585px; padding: 7px 0 0 25px; }
.weather svg { width: 36px; height: 36px; }
.badge { position: absolute; left: 39px; top: 7px; width: 20px; font-size: 14px; line-height: 20px; text-align: center; }
.forecast { display: flex; flex-direction: column; margin-left: 3px; padding-top: 1px; font-size: 14px; line-height: 20px; }
.forecast .kana { color: #c7cfd0; }
.apps { display: flex; align-items: center; }
.start { width: 30px; height: 30px; }
.search {
  display: flex;
  align-items: center;
  width: 273px;
  height: 38px;
  margin: 0 6px 0 17px;
  padding: 0 7px 0 14px;
  border-radius: 19px;
  background: #f1f3f4;
}
.glass { width: 18px; height: 18px; }
.search span { margin-left: 13px; color: #666; font-size: 17px; font-weight: 300; }
.bing { width: 26px; height: 26px; margin-left: auto; }
.app {
  position: relative;
  display: flex;
  align-items: center;
  justify-content: center;
  width: 50px;
  height: 50px;
  margin-right: 5px;
  border-radius: 5px;
}
.app svg { width: 30px; height: 30px; }
.app svg.help { width: 36px; height: 36px; margin: -6px -6px 0 0; }
.current { background: #22383e; border: 1px solid #2c4248; }
.app i { position: absolute; bottom: 0; width: 20px; height: 4px; border-radius: 2px; background: #4cc2ff; }
.app.idle i { width: 8px; background: #939c9e; }
.tray { display: flex; align-items: center; margin-left: auto; padding-right: 25px; }
.tray svg { width: 20px; height: 20px; margin-right: 20px; }
.tray svg:nth-child(4), .tray svg:nth-child(5) { margin-right: 10px; }
.tray svg:nth-child(6) { margin-right: 0; }
.clock { display: flex; flex-direction: column; align-items: flex-end; width: 97px; font-size: 14.4px; line-height: 20px; }
.count {
  width: 20px;
  height: 20px;
  margin-left: 9px;
  border-radius: 50%;
  background: #4cc2ff;
  color: #122b31;
  font-size: 13px;
  line-height: 20px;
  text-align: center;
}
```
